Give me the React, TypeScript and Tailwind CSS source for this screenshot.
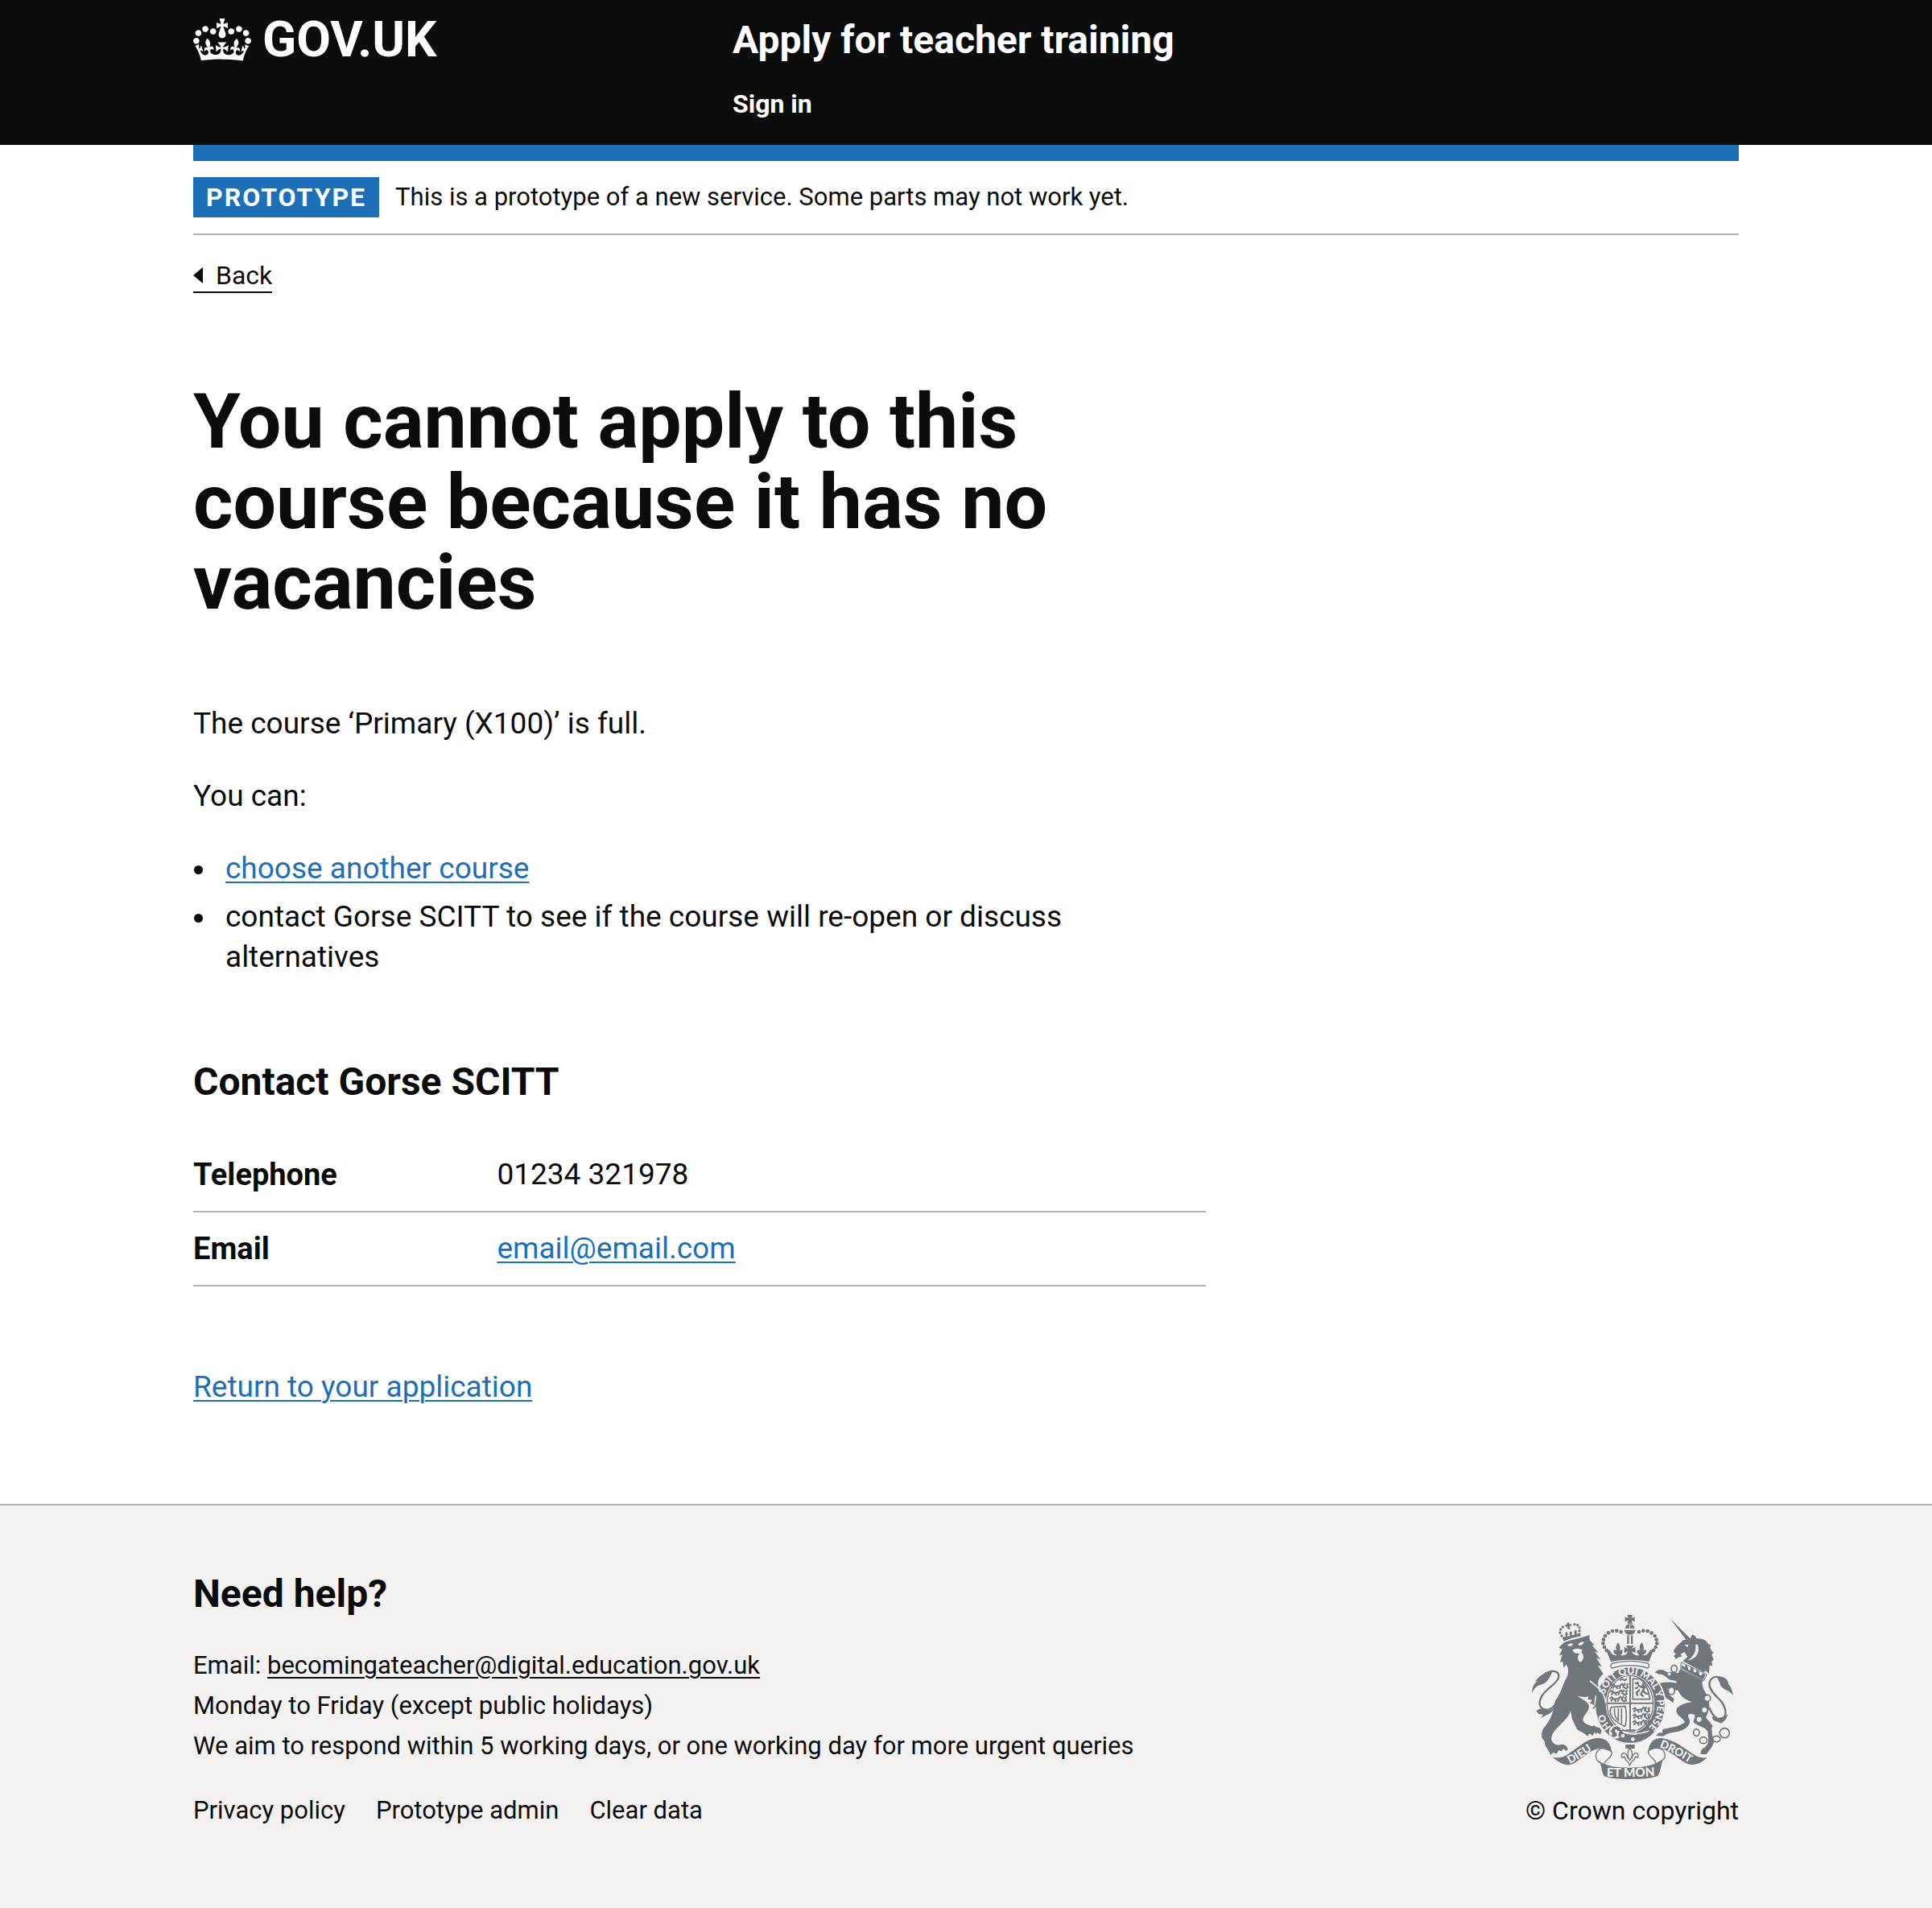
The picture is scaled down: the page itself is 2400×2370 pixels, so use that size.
import type { ReactNode } from "react";

const Container = ({ children, className = "" }: { children: ReactNode; className?: string }) => (
  <div className={"mx-auto w-4/5 max-w-[1920px] " + className}>{children}</div>
);

const CrownIcon = () => (
  <svg viewBox="0 0 132 97" className="h-[53px] w-[72px] shrink-0" fill="currentColor" aria-hidden="true">
    <path
      fillRule="evenodd"
      d="M25 30.2c3.5 1.5 7.7-.2 9.1-3.7 1.5-3.6-.2-7.8-3.9-9.2-3.6-1.4-7.6.3-9.1 3.9-1.4 3.5.3 7.5 3.9 9zM9 39.5c3.6 1.5 7.8-.2 9.2-3.7 1.5-3.6-.2-7.8-3.9-9.1-3.6-1.5-7.6.2-9.1 3.8-1.4 3.5.3 7.5 3.8 9zM4.4 57.2c3.5 1.5 7.7-.2 9.1-3.8 1.5-3.6-.2-7.7-3.9-9.1-3.5-1.5-7.6.3-9.1 3.8-1.4 3.5.3 7.6 3.9 9.1zm38.3-21.4c3.5 1.5 7.7-.2 9.1-3.8 1.5-3.6-.2-7.7-3.9-9.1-3.6-1.5-7.6.3-9.1 3.8-1.3 3.6.4 7.7 3.9 9.1zm64.4-5.6c-3.6 1.5-7.8-.2-9.1-3.7-1.5-3.6.2-7.8 3.8-9.2 3.6-1.4 7.7.3 9.2 3.9 1.3 3.5-.4 7.5-3.9 9zm15.9 9.3c-3.6 1.5-7.7-.2-9.1-3.7-1.5-3.6.2-7.8 3.7-9.1 3.6-1.5 7.7.2 9.2 3.8 1.5 3.5-.3 7.5-3.8 9zm4.7 17.7c-3.6 1.5-7.8-.2-9.2-3.8-1.5-3.6.2-7.7 3.9-9.1 3.6-1.5 7.7.3 9.2 3.8 1.3 3.5-.4 7.6-3.9 9.1zM89.3 35.8c-3.6 1.5-7.8-.2-9.2-3.8-1.4-3.6.2-7.7 3.9-9.1 3.6-1.5 7.7.3 9.2 3.8 1.4 3.6-.3 7.7-3.9 9.1zM69.7 17.7l8.9 4.7V9.3l-8.9 2.8c-.2-.3-.5-.6-.9-.9L72.4 0H59.6l3.5 11.2c-.3.3-.6.5-.9.9l-8.8-2.8v13.1l8.8-4.7c.3.3.6.7.9.9l-5 15.4v.1c-.2.8-.4 1.6-.4 2.4 0 4.1 3.1 7.5 7 8.1h.2c.3 0 .7.1 1 .1.4 0 .7 0 1-.1h.2c4-.6 7.1-4.1 7.1-8.1 0-.8-.1-1.7-.4-2.4V34l-5.1-15.4c.4-.2.7-.6 1-.9zM66 92.8c16.9 0 32.8 1.1 47.1 3.2 4-16.9 8.9-26.7 14-33.5l-9.6-3.4c1 4.9 1.1 7.2 0 10.2-1.5-1.4-3-4.3-4.2-8.7L108.6 76c2.8-2 5-3.2 7.5-3.3-4.4 9.4-10 11.9-13.6 11.2-4.3-.8-6.3-4.6-5.6-7.9 1-4.7 5.7-5.9 8-.5 4.3-8.7-3-11.4-7.6-8.8 7.1-7.2 7.9-13.5 2.1-21.1-8 6.1-8.1 12.3-4.5 20.8-4.7-5.4-12.1-2.5-9.5 6.2 3.4-5.2 7.9-2 7.2 3.1-.6 4.3-6.4 7.8-13.5 7.2-10.3-.9-10.9-8-11.2-13.8 2.5-.5 7.1 1.8 11 7.3L80.2 60c-4.1 4.4-8 5.3-12.3 5.4 1.4-4.4 8-11.6 8-11.6H55.5s6.4 7.2 7.9 11.6c-4.2-.1-8-1-12.3-5.4l1.4 16c3.9-5.5 8.5-7.7 10.9-7.3-.3 5.8-.9 12.8-11.1 13.8-7.2.6-12.9-2.9-13.5-7.2-.7-5 3.8-8.3 7.1-3.1 2.7-8.7-4.6-11.6-9.4-6.2 3.7-8.5 3.6-14.7-4.6-20.8-5.8 7.6-5 13.9 2.2 21.1-4.7-2.6-11.9.1-7.7 8.8 2.3-5.5 7.1-4.2 8.1.5.7 3.3-1.3 7.1-5.7 7.9-3.5.7-9-1.8-13.5-11.2 2.5.1 4.7 1.3 7.5 3.3l-4.7-15.4c-1.2 4.4-2.7 7.2-4.3 8.7-1.1-3-.9-5.3 0-10.2l-9.5 3.4c5 6.9 9.9 16.7 14 33.5 14.8-2.1 30.8-3.2 47.7-3.2z"
    />
  </svg>
);

const INK = "#6f777b";
const PAPER = "#f3f2f1";

// Pearls along the left arch of the royal crown; the right arch mirrors them.
const PEARLS = [
  [404, 111],
  [388, 107],
  [372, 108],
  [357, 115],
  [345, 126],
  [339, 140],
  [337, 154],
  [342, 168],
  [350, 180],
];

const LION_PEARLS = [
  [183, 126],
  [177, 114],
  [179, 102],
  [187, 93],
  [231, 83],
  [242, 86],
  [249, 95],
  [249, 107],
];

const LionPassant = ({ x, y }: { x: number; y: number }) => (
  <g transform={`translate(${x} ${y})`} fill="none" stroke={INK} strokeWidth="6" strokeLinejoin="round">
    <path d="M0 4 L8 -2 L14 6 L32 4 L40 -4 L46 4 L52 -6 M10 6 L4 14 M18 8 L24 16 M34 6 L30 15 M42 6 L54 14 L62 10 L57 2 L64 -4" />
  </g>
);

const RoyalArms = () => (
  <svg viewBox="72 48 750 612" className="h-[204px] w-[250px]" role="img" aria-label="Royal coat of arms">
    <defs>
      <path id="garter-line" d="M337 383 A101 115 0 0 1 539 383 A101 115 0 0 1 337 383" />
      <path id="ribbon-left" d="M214 603 Q264 577 320 533" />
      <path id="ribbon-right" d="M547 540 Q600 560 672 608" />
      <path id="ribbon-centre" d="M350 650 Q437 654 530 648" />
    </defs>

    <g fill={INK}>
      {/* Ribbon */}
      <path d="M150 579C175 582 190 578 205 568C240 545 270 515 305 508C345 502 365 520 370 560C355 552 340 545 325 545C290 548 250 590 225 603C200 613 175 600 150 579Z" />
      <path d="M725 580C700 582 685 575 670 565C640 545 605 515 560 508C525 503 510 525 505 555C520 545 540 543 550 545C585 550 625 592 655 604C680 612 705 598 725 580Z" />
      <path d="M322 592C345 612 390 617 437 617C485 617 530 610 562 583C552 610 552 632 541 648C520 657 480 660 437 660C400 660 360 658 341 648C330 632 334 610 322 592Z" />
      <g fill="none" stroke={INK} strokeWidth="4">
        <path d="M370 558C374 580 346 584 341 604M325 547C306 560 304 588 328 600M325 547C345 540 362 548 370 560" />
        <path d="M505 553C502 576 530 580 535 602M552 546C572 560 572 578 560 588M552 546C530 540 514 548 505 556" />
      </g>

      {/* Lion body */}
      <path d="M172 170L190 152C205 142 262 134 286 122L287 142L304 160L296 162L320 188L306 184L328 214L312 208L332 240L318 236L338 268C318 284 314 300 322 318C340 345 346 370 342 392L330 410L322 404L312 408L315 394L298 400L304 384L288 376L297 365L280 362L283 352L268 354L243 350C262 366 290 372 284 396C280 412 262 424 262 440C270 458 286 456 294 463L304 460L312 466L324 468L332 480L326 494L318 486L310 492L306 484L298 498L288 490L278 500C268 486 256 486 240 474L222 436L216 404C210 425 195 440 180 455C160 475 143 490 145 514C150 528 162 535 176 532L190 530L200 536L207 550L198 554L190 546L182 556L172 552L164 566L152 560L142 570L135 556L122 535L119 520L109 504C106 480 115 470 125 458C155 420 150 392 160 366C180 340 186 310 198 288C210 268 210 250 200 232L190 246L187 222L177 224L185 196L174 198L185 176Z" />

      {/* Unicorn body */}
      <path d="M624 250L708 292C704 312 712 326 722 342C738 372 736 402 720 430C728 440 736 448 746 462L742 470C744 482 742 492 746 502L750 520C748 536 736 548 722 568L700 566C702 552 708 542 714 544C730 530 732 516 728 498C734 462 690 468 674 446C676 430 690 418 664 416C648 418 656 428 660 440C664 462 640 478 610 484C590 486 574 490 562 500L534 498L546 486L556 488L560 474C580 468 616 468 642 448C638 432 612 426 610 404C614 384 640 378 668 372C650 366 634 358 624 342C600 310 612 278 624 250Z" />
      <path d="M628 268C606 262 592 256 580 264C562 250 545 246 530 262L548 270C564 266 568 280 588 290C602 290 612 300 622 292Z" />
      <path d="M618 304C590 296 570 298 548 302L554 320L562 336L570 356L586 366L598 376L602 360L584 346L576 322C592 322 606 334 618 326Z" />

      {/* Garter */}
      <ellipse cx="438" cy="384" rx="131" ry="143" stroke={PAPER} strokeWidth="5" />
      <ellipse cx="438" cy="378" rx="91" ry="109" fill={PAPER} />
      <ellipse cx="438" cy="378" rx="86" ry="104" fill="none" stroke={INK} strokeWidth="4" />
      <path d="M350 377H526M438 274V474M420 478H458" stroke={INK} strokeWidth="6" />
      <LionPassant x={368} y={308} />
      <LionPassant x={364} y={332} />
      <LionPassant x={362} y={356} />
      <LionPassant x={448} y={396} />
      <LionPassant x={448} y={420} />
      <LionPassant x={448} y={444} />
      <path d="M400 292L408 286L418 292L426 286" fill="none" stroke={INK} strokeWidth="6" />
      <path d="M448 286H474Q504 306 512 362H448Z" fill="none" stroke={INK} strokeWidth="5" />
      <path
        d="M456 304L466 300L470 312L484 318L486 308L492 318L486 330L496 340L506 342M484 332L478 344L488 352M474 326L462 338L466 350M468 318L456 322"
        fill="none"
        stroke={INK}
        strokeWidth="7"
      />
      <path
        d="M366 392L420 388Q428 424 420 462M366 392Q358 416 378 438Q396 454 420 464M380 396Q376 420 392 440M394 396V444M406 396V452"
        fill="none"
        stroke={INK}
        strokeWidth="5"
      />

      {/* Buckle and strap */}
      <path d="M392 474Q440 506 508 480" fill="none" stroke={PAPER} strokeWidth="5" />
      <path d="M464 476L454 494" stroke={PAPER} strokeWidth="4" />
      <circle cx="384" cy="484" r="25" fill={PAPER} />
      <path d="M372 470Q388 456 402 470Q406 480 392 480Q382 484 390 496Q382 508 368 500Q376 486 364 482Q370 478 372 470Z" />
      <circle cx="386" cy="480" r="5" fill={PAPER} />
      <path d="M398 478L410 476V506L394 500Z" />
      <circle cx="411" cy="498" r="7" fill={PAPER} />
      <circle cx="448" cy="511" r="7" fill={PAPER} />

      {/* Lion foreleg over the garter */}
      <path
        d="M284 290C312 312 342 336 343 372L346 392L334 410L326 402L314 410L318 394L306 392L310 372C318 350 304 330 284 312Z"
      />
      <path d="M288 294C314 314 344 334 347 376" fill="none" stroke={PAPER} strokeWidth="5" />

      {/* Pendant */}
      <path d="M421 531H455V546H421Z" />
      <path
        d="M437 544Q424 560 432 580L437 590L443 580Q450 560 437 544ZM430 584Q426 562 412 562Q402 568 408 580L416 576Q420 590 430 594M444 584Q448 562 462 562Q472 568 466 580L458 576Q454 590 444 594M430 594L437 608L444 594"
        fill="none"
        stroke={INK}
        strokeWidth="4"
      />

      {/* Royal crown */}
      <path d="M427 48H447L443 60L455 55V73L443 68L447 80H427L431 68L419 73V55L431 60Z" />
      <path d="M419 98Q423 82 437 82Q451 82 455 98Z" />
      <path d="M416 104H458Q456 120 437 122Q418 120 416 104Z" />
      <path d="M437 84V98" stroke={PAPER} strokeWidth="3" />
      <path d="M427 124H434V156H427ZM441 124H448V156H441Z" />
      {PEARLS.map(([x, y]) => (
        <g key={x}>
          <circle cx={x} cy={y} r="7" />
          <circle cx={875 - x} cy={y} r="7" />
        </g>
      ))}
      <path d="M350 182L360 178L370 193Q380 202 390 196Q374 194 376 180Q382 174 388 182Q380 166 393 150Q406 166 398 182Q404 174 410 180Q412 192 402 198Q424 202 430 184L416 190V168L430 174L422 162H452L444 174L458 168V190L444 184Q450 202 472 198Q462 192 464 180Q470 174 476 182Q468 166 481 150Q494 166 486 182Q492 174 498 180Q500 194 484 196Q494 202 504 193L514 178L524 182L508 222Q437 208 366 222Z" />
      <path d="M372 228Q437 212 504 228Q514 236 504 246Q437 226 370 246Q360 236 372 228Z" fill={PAPER} stroke={INK} strokeWidth="4" />

      {/* Lion face and crown */}
      <path d="M204 160Q216 150 226 156Q222 166 210 164ZM244 158Q252 148 266 148Q264 160 250 162ZM222 180Q240 168 260 178L256 186L262 196Q268 212 254 224Q240 218 244 200L250 192L232 190Z" fill={PAPER} />
      {LION_PEARLS.map(([x, y]) => (
        <circle key={`${x}-${y}`} cx={x} cy={y} r="5" />
      ))}
      <path d="M203 77L211 76L211 83L218 81L219 89L212 89L215 101H206L204 91L197 92L196 84L203 84Z" />
      <path d="M186 134L192 128L198 130L196 116L201 110L206 118L204 128L214 126L212 112L218 108L222 114L220 124L230 122L230 108L235 103L240 110L238 120L252 113L254 127Q222 132 190 146Z" />

      {/* Lion tail */}
      <path d="M164 372C154 398 128 408 110 396C92 384 102 350 128 328C152 306 180 288 170 266C160 254 140 256 124 266" fill="none" stroke={INK} strokeWidth="7" />
      <path d="M72 340C72 316 82 298 98 294L84 296C96 280 120 258 150 256C138 280 132 304 104 308C90 312 80 320 72 340Z" />
      <path d="M88 404L106 396Q134 412 158 392Q142 418 128 420L106 432L114 420L96 416Z" />

      {/* Unicorn head, collar and mane */}
      <path d="M588 62L664 138L652 148Z" />
      <path d="M636 142L660 138L670 121L680 126L686 136C712 136 724 144 728 156L738 160L736 170L742 182L749 188L742 196L749 214L742 222L744 238L734 236L732 268L720 256L712 262L634 220L652 204L640 186L626 194L632 202L618 206L608 212L601 200L610 192L602 190L600 180L612 164Z" />
      <path d="M640 160L656 158L652 168ZM690 158C700 188 684 212 652 218C676 202 684 184 682 158Z" fill={PAPER} />
      <path d="M628 224L724 270L712 293L626 248Z" fill={PAPER} stroke={INK} strokeWidth="3" />
      <path d="M628 246L632 234L640 244L646 232L652 240L656 254L662 254L664 240L672 246L676 262L684 262L686 250L694 258L696 272L704 272L710 264L718 272L710 290Z" />

      {/* Chain and tail */}
      <g fill="none" stroke={INK} strokeWidth="5">
        <ellipse cx="602" cy="248" rx="11" ry="13" />
        <ellipse cx="592" cy="331" rx="12" ry="14" fill={PAPER} />
        <circle cx="584" cy="268" r="7" fill={PAPER} strokeWidth="3" />
        <circle cx="726" cy="358" r="12" fill={PAPER} />
        <ellipse cx="685" cy="486" rx="11" ry="13" />
        <ellipse cx="711" cy="515" rx="14" ry="12" />
        <ellipse cx="760" cy="510" rx="14" ry="11" />
        <circle cx="790" cy="488" r="18" />
        <path d="M732 392C744 420 760 440 778 436C804 426 794 390 774 366C746 340 722 312 738 290C750 274 768 276 784 288" strokeWidth="7" />
      </g>
      <circle cx="715" cy="402" r="9" fill={PAPER} />
      <circle cx="695" cy="437" r="9" fill={PAPER} />
      <path d="M760 278C790 274 804 288 804 306C816 318 820 334 822 348C808 324 776 330 772 300Z" />
      <path d="M742 426Q770 440 802 418L796 436L778 452L748 440Z" />
    </g>

    {/* Mottoes */}
    <g fill={PAPER} fontFamily="Lato, sans-serif" fontWeight="900" fontSize="36">
      <text><textPath href="#garter-line" startOffset="40">SOIT QUI MAL Y PENSE</textPath></text>
      <text><textPath href="#garter-line" startOffset="588">HO</textPath></text>
      <g fontSize="41">
        <text><textPath href="#ribbon-left">DIEU</textPath></text>
        <text><textPath href="#ribbon-right">DROIT</textPath></text>
        <text fontSize="46"><textPath href="#ribbon-centre">ET MON</textPath></text>
      </g>
    </g>
  </svg>
);

const Header = () => (
  <header className="bg-[#0b0c0c] text-white">
    <Container className="flex pt-5 pb-[26px]">
      <div className="w-1/3">
        <a href="#" className="flex items-center gap-3.5" aria-label="GOV.UK">
          <CrownIcon />
          <span className="text-[62px] leading-[58px] font-bold">GOV.UK</span>
        </a>
      </div>
      <div className="pl-[30px] font-bold">
        <a href="#" className="block text-[48px] leading-[60px]">
          Apply for teacher training
        </a>
        <nav className="mt-6 text-[32px] leading-[50px]">
          <a href="#">Sign in</a>
        </nav>
      </div>
    </Container>
  </header>
);

const linkStyle = "text-[#1d70b8] underline decoration-2 underline-offset-[4px]";

const contactRows = [
  { label: "Telephone", value: "01234 321978" },
  { label: "Email", value: <a href="mailto:email@email.com" className={linkStyle}>email@email.com</a> },
];

const footerLinks = ["Privacy policy", "Prototype admin", "Clear data"];

export default function App() {
  return (
    <div className="flex min-h-screen flex-col bg-white font-[Roboto,sans-serif] text-[37px] leading-[50px] text-[#0b0c0c]">
      <Header />
      <Container>
        <div className="h-5 bg-[#1d70b8]" />
        <div className="flex items-center gap-5 border-b-2 border-[#b1b4b6] py-5 text-[31px]">
          <strong className="bg-[#1d70b8] px-4 text-[32px] tracking-[2px] text-white">PROTOTYPE</strong>
          <span>This is a prototype of a new service. Some parts may not work yet.</span>
        </div>
        <a href="#" className="mt-[30px] inline-flex items-center gap-4 border-b-2 border-[#0b0c0c] text-[32px] leading-[40px]">
          <svg viewBox="0 0 12 20" className="h-5 w-3" fill="currentColor" aria-hidden="true">
            <path d="M0 10L12 0V20Z" />
          </svg>
          Back
        </a>

        <main className="w-[calc(66.667%-22px)] pt-[109px]">
          <h1 className="text-[95px] leading-[100px] font-bold">
            You cannot apply to this course because it has no vacancies
          </h1>
          <p className="mt-[100px]">The course ‘Primary (X100)’ is full.</p>
          <p className="mt-10">You can:</p>
          <ul className="mt-10 flex list-disc flex-col gap-[10px] pl-[30px]">
            <li className="pl-[10px]">
              <a href="#" className={linkStyle}>choose another course</a>
            </li>
            <li className="pl-[10px]">contact Gorse SCITT to see if the course will re-open or discuss alternatives</li>
          </ul>
          <h2 className="mt-[100px] text-[48px] leading-[60px] font-bold">Contact Gorse SCITT</h2>
          <dl className="mt-10">
            {contactRows.map((row) => (
              <div key={row.label} className="flex border-b-2 border-[#b1b4b6] py-5">
                <dt className="w-3/10 text-[38px] font-bold">{row.label}</dt>
                <dd>{row.value}</dd>
              </div>
            ))}
          </dl>
          <p className="mt-[100px]">
            <a href="#" className={linkStyle}>Return to your application</a>
          </p>
        </main>
      </Container>

      <footer className="mt-[120px] grow border-t-2 border-[#b1b4b6] bg-[#f3f2f1] pt-20 text-[31px]">
        <Container className="flex items-end justify-between">
          <div>
            <h2 className="text-[48px] leading-[60px] font-bold">Need help?</h2>
            <p className="mt-[34px]">
              Email:{" "}
              <a href="mailto:becomingateacher@digital.education.gov.uk" className="underline decoration-2 underline-offset-[4px]">
                becomingateacher@digital.education.gov.uk
              </a>
            </p>
            <p>Monday to Friday (except public holidays)</p>
            <p>We aim to respond within 5 working days, or one working day for more urgent queries</p>
            <ul className="mt-[30px] flex gap-[38px]">
              {footerLinks.map((label) => (
                <li key={label}>
                  <a href="#">{label}</a>
                </li>
              ))}
            </ul>
          </div>
          <a href="#" className="flex flex-col items-center gap-[14px] text-[32px]">
            <RoyalArms />
            © Crown copyright
          </a>
        </Container>
      </footer>
    </div>
  );
}
